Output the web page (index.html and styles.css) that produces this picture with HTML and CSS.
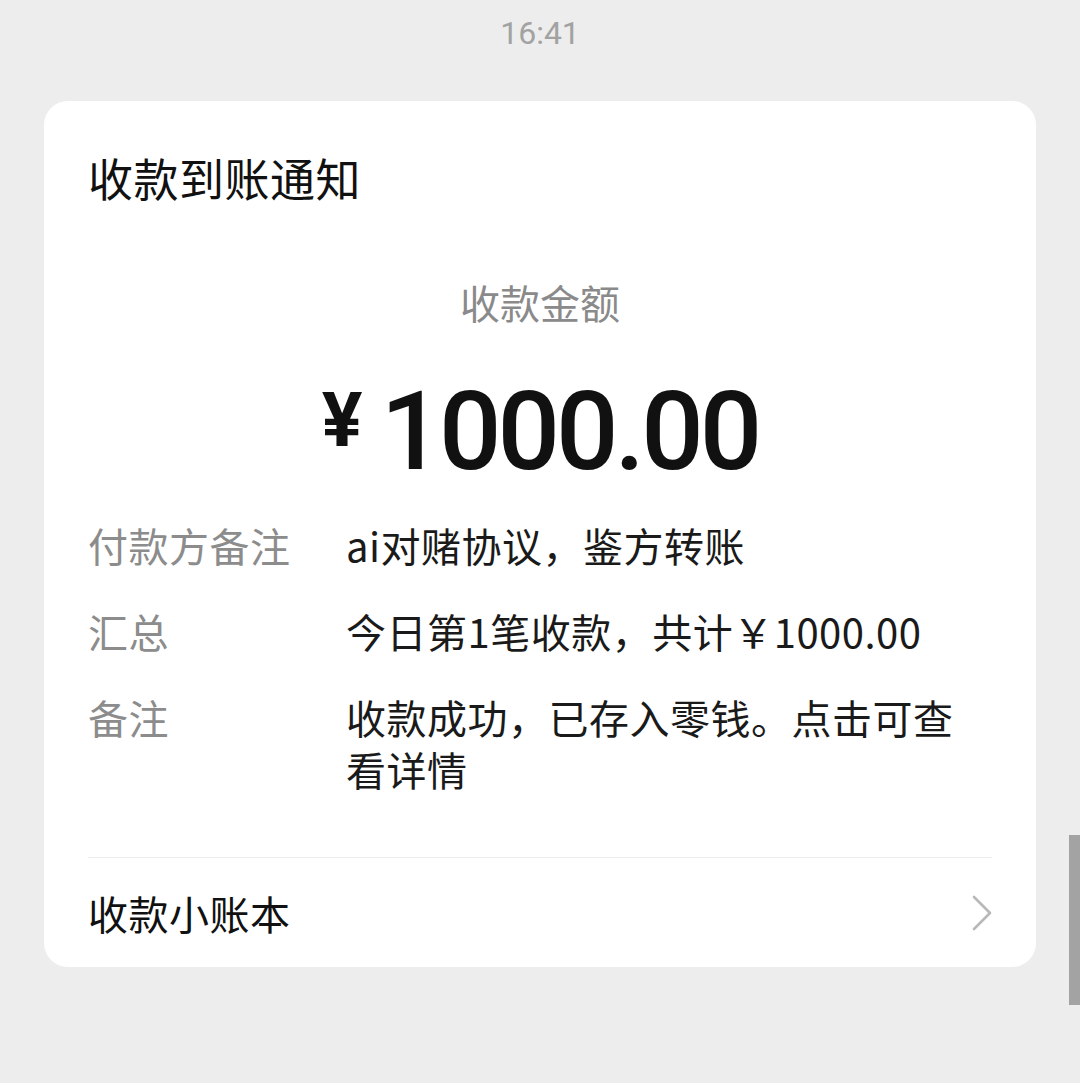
FILE: index.html
```html
<!DOCTYPE html>
<html lang="zh-CN">
<head>
  <meta charset="UTF-8">
  <meta name="viewport" content="width=device-width, initial-scale=1.0">
  <title>收款到账通知</title>
  <link rel="stylesheet" href="styles.css">
</head>
<body>
  <div class="status">
    <span class="time">16:41</span>
  </div>

  <div class="card">
    <h1 class="title">收款到账通知</h1>

    <div class="amount-label">收款金额</div>
    <div class="amount">
      <span class="yen">¥</span>
      <span class="num">1000.00</span>
    </div>

    <div class="rows">
      <div class="label">付款方备注</div>
      <div class="value">ai对赌协议，鉴方转账</div>
      <div class="label">汇总</div>
      <div class="value">今日第1笔收款，共计￥1000.00</div>
      <div class="label">备注</div>
      <div class="value">收款成功，已存入零钱。点击可查看详情</div>
    </div>

    <div class="footer">
      <span>收款小账本</span>
      <svg class="chevron" width="20" height="36" viewBox="0 0 20 36">
        <polyline points="2,2 18,18 2,34" fill="none" stroke="#b8b8b8" stroke-width="2.6" stroke-linecap="round" stroke-linejoin="round"/>
      </svg>
    </div>
  </div>

  <div class="scrollbar"></div>
</body>
</html>
```

FILE: styles.css
```css
html, body { margin: 0; padding: 0; }
body { background: #ededed; min-height: 1083px; font-family: "Noto Sans CJK SC", "Noto Sans", sans-serif; color: #111; }

.status { height: 101px; display: flex; justify-content: center; align-items: flex-start; padding-top: 12px; box-sizing: border-box; }
.time { font-family: Roboto, "Noto Sans", sans-serif; font-size: 32px; line-height: 42px; color: #a2a2a2; }

.card { background: #fff; border-radius: 24px; margin: 0 44px; padding: 0 44px; }
.title { margin: 0; padding-top: 51px; font-size: 45px; line-height: 52px; font-weight: 400; letter-spacing: 0.5px; }

.amount-label { margin-top: 72px; text-align: center; font-size: 40px; line-height: 52px; color: #8a8a8a; }
.amount { margin-top: 44px; display: flex; justify-content: center; align-items: flex-start; height: 120px; }
.yen { font-family: Roboto, sans-serif; font-weight: 700; font-size: 76px; line-height: 76px; margin-top: 10px; margin-right: 18px; }
.num { font-family: Roboto, sans-serif; font-weight: 500; font-size: 110px; line-height: 120px; letter-spacing: -4px; }

.rows { margin-top: 27px; display: grid; grid-template-columns: 258px 1fr; row-gap: 34px; padding-right: 20px; font-size: 40px; line-height: 52px; letter-spacing: 0.5px; }
.label { color: #8c8c8c; }
.value { color: #1a1a1a; }

.footer { margin-top: 62px; border-top: 1px solid #ececec; height: 109px; display: flex; justify-content: space-between; align-items: center; font-size: 40px; letter-spacing: 0.5px; }

.scrollbar { position: fixed; right: 0; top: 835px; width: 11px; height: 170px; background: #a3a3a3; }
```
